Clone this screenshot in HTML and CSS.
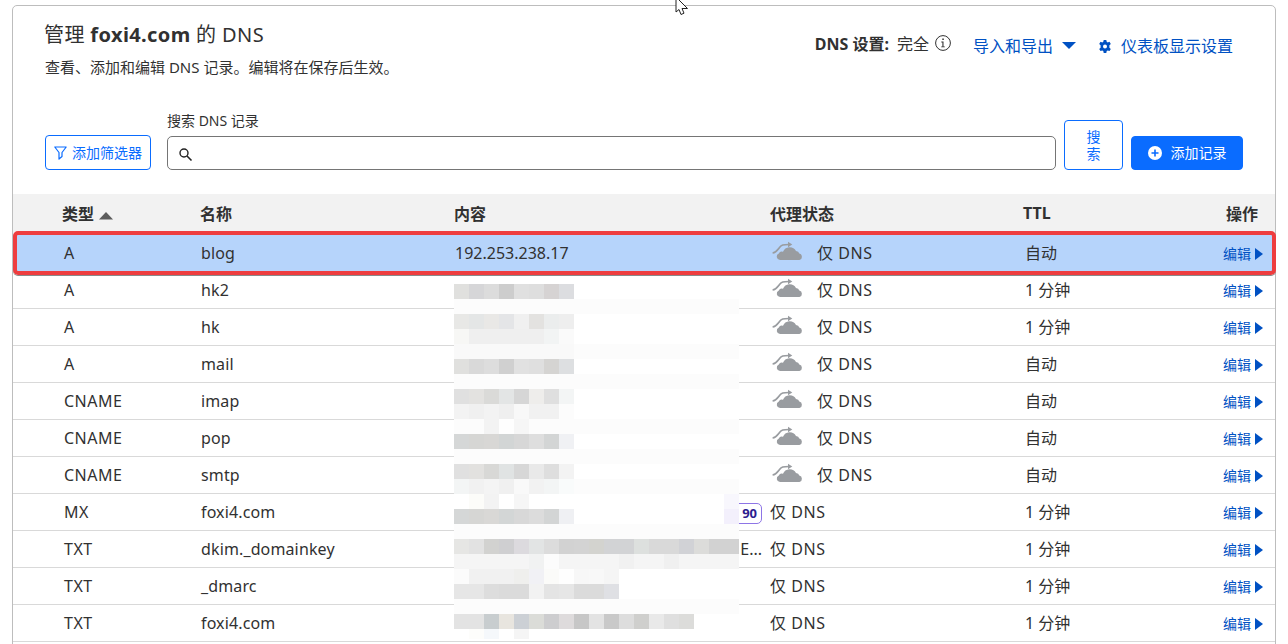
FILE: index.html
```html
<!DOCTYPE html>
<html lang="zh">
<head>
<meta charset="utf-8">
<title>DNS</title>
<link rel="stylesheet" href="styles.css">
</head>
<body>
<svg class="cursor" width="16" height="18" viewBox="0 0 16 18"><path d="M1 -3V12L4 9.500 6 14.500 9 13.200 7 8.500H12.500Z" fill="#fff" stroke="#222" stroke-width="1"/></svg>
<main class="card">
  <header class="head">
    <div class="top">
      <div class="intro">
        <h1 class="title">管理 <b>foxi4.com</b> 的 DNS</h1>
        <p class="sub">查看、添加和编辑 DNS 记录。编辑将在保存后生效。</p>
      </div>
      <div class="tools">
        <span class="setting"><b>DNS 设置:</b> 完全
          <svg class="info" width="16" height="16" viewBox="0 0 16 16"><circle cx="8" cy="8" r="7.400" fill="none" stroke="#313131"/><rect x="7.300" y="3.500" width="1.500" height="1.500" fill="#313131"/><path d="M6.300 6.600H8.500V11.500H9.800V12.300H6.200V11.500H7.400V7.400H6.300Z" fill="#313131"/></svg>
        </span>
        <a class="link export">导入和导出 <svg width="14" height="7" viewBox="0 0 14 7"><path d="M0 0H14L7 7Z" fill="#0051c3"/></svg></a>
        <a class="link dash"><svg width="12" height="13" viewBox="0 0 12 13"><path fill-rule="evenodd" d="M4.700 0H7.300L7.700 1.800 8.700 2.400 10.500 1.800 11.800 4 10.400 5.300V7.700L11.800 8.900 10.500 11.100 8.700 10.500 7.700 11.100 7.300 13H4.700L4.300 11.100 3.300 10.500 1.500 11.100 .2 8.900 1.600 7.700V5.300L.2 4 1.500 1.800 3.300 2.400 4.300 1.800ZM6 4.500A2 2 0 1 0 6 8.500 2 2 0 1 0 6 4.500Z" fill="#0051c3"/></svg> 仪表板显示设置</a>
      </div>
    </div>
    <div class="search-row">
      <button class="btn filter"><svg width="13" height="14" viewBox="0 0 13 14"><path d="M.8 1H12.200L8 6.500V10.500L5 13V6.500Z" fill="none" stroke="#0a6cff" stroke-width="1.200" stroke-linejoin="round"/></svg>添加筛选器</button>
      <label class="search">
        <span class="label">搜索 DNS 记录</span>
        <span class="input"><svg width="15" height="15" viewBox="0 0 15 15"><circle cx="6" cy="6" r="4" fill="none" stroke="#222" stroke-width="1.400"/><path d="M9 9L13.500 13.500" stroke="#222" stroke-width="1.600"/></svg></span>
      </label>
      <button class="btn go">搜索</button>
      <button class="btn add"><svg width="14" height="14" viewBox="0 0 14 14"><circle cx="7" cy="7" r="7" fill="#fff"/><path d="M7 3.500V10.500M3.500 7H10.500" stroke="#0a6cff" stroke-width="1.600"/></svg>添加记录</button>
    </div>
  </header>

  <section class="table">
    <div class="thead">
      <span>类型 <svg class="sort" width="14" height="8" viewBox="0 0 14 8"><path d="M7 0L14 7.500H0Z" fill="#5c5c5c"/></svg></span>
      <span>名称</span><span>内容</span><span>代理状态</span><span>TTL</span><span class="act">操作</span>
    </div>

    <div class="row selected"><span class="kind">A</span><span class="name">blog</span><span>192.253.238.17</span>
      <span class="status"><svg class="cloud" width="32" height="20"><use href="#cl"/></svg><span class="dns">仅 DNS</span></span><span>自动</span>
      <a class="edit">编辑<i class="arr"></i></a></div>
    <div class="row"><span class="kind">A</span><span class="name">hk2</span><span></span>
      <span class="status"><svg class="cloud" width="32" height="20"><use href="#cl"/></svg><span class="dns">仅 DNS</span></span><span>1 分钟</span>
      <a class="edit">编辑<i class="arr"></i></a></div>
    <div class="row"><span class="kind">A</span><span class="name">hk</span><span></span>
      <span class="status"><svg class="cloud" width="32" height="20"><use href="#cl"/></svg><span class="dns">仅 DNS</span></span><span>1 分钟</span>
      <a class="edit">编辑<i class="arr"></i></a></div>
    <div class="row"><span class="kind">A</span><span class="name">mail</span><span></span>
      <span class="status"><svg class="cloud" width="32" height="20"><use href="#cl"/></svg><span class="dns">仅 DNS</span></span><span>自动</span>
      <a class="edit">编辑<i class="arr"></i></a></div>
    <div class="row"><span class="kind">CNAME</span><span class="name">imap</span><span></span>
      <span class="status"><svg class="cloud" width="32" height="20"><use href="#cl"/></svg><span class="dns">仅 DNS</span></span><span>自动</span>
      <a class="edit">编辑<i class="arr"></i></a></div>
    <div class="row"><span class="kind">CNAME</span><span class="name">pop</span><span></span>
      <span class="status"><svg class="cloud" width="32" height="20"><use href="#cl"/></svg><span class="dns">仅 DNS</span></span><span>自动</span>
      <a class="edit">编辑<i class="arr"></i></a></div>
    <div class="row"><span class="kind">CNAME</span><span class="name">smtp</span><span></span>
      <span class="status"><svg class="cloud" width="32" height="20"><use href="#cl"/></svg><span class="dns">仅 DNS</span></span><span>自动</span>
      <a class="edit">编辑<i class="arr"></i></a></div>
    <div class="row"><span class="kind">MX</span><span class="name">foxi4.com</span><span class="tail"><em class="prio">90</em></span>
      <span class="dns">仅 DNS</span><span>1 分钟</span>
      <a class="edit">编辑<i class="arr"></i></a></div>
    <div class="row"><span class="kind">TXT</span><span class="name">dkim._domainkey</span><span class="tail">E...</span>
      <span class="dns">仅 DNS</span><span>1 分钟</span>
      <a class="edit">编辑<i class="arr"></i></a></div>
    <div class="row"><span class="kind">TXT</span><span class="name">_dmarc</span><span></span>
      <span class="dns">仅 DNS</span><span>1 分钟</span>
      <a class="edit">编辑<i class="arr"></i></a></div>
    <div class="row"><span class="kind">TXT</span><span class="name">foxi4.com</span><span></span>
      <span class="dns">仅 DNS</span><span>1 分钟</span>
      <a class="edit">编辑<i class="arr"></i></a></div>

    <svg class="mosaic" width="285" height="355" viewBox="0 0 285 355">
      <rect width="285" height="355" fill="#fff"/>
      <g>
        <rect x="0" y="0" width="15" fill="#e0e0de"/><rect x="15" y="0" width="15" fill="#d6d6d8"/><rect x="30" y="0" width="15" fill="#dcdcdc"/><rect x="45" y="0" width="15" fill="#cdcdcd"/><rect x="60" y="0" width="15" fill="#e0e0e0"/><rect x="75" y="0" width="15" fill="#dedede"/><rect x="90" y="0" width="15" fill="#d6d3d3"/><rect x="105" y="0" width="15" fill="#dcdde0"/>
        <rect x="0" y="15" width="285" fill="#fcfcfc"/>
        <rect x="0" y="30" width="15" fill="#e8e8e6"/><rect x="15" y="30" width="15" fill="#e4e6e6"/><rect x="30" y="30" width="15" fill="#e9e8e6"/><rect x="45" y="30" width="15" fill="#e4e5e7"/><rect x="60" y="30" width="15" fill="#f0f0f0"/><rect x="75" y="30" width="15" fill="#e3e2e0"/><rect x="90" y="30" width="15" fill="#ebeded"/><rect x="105" y="30" width="15" fill="#eeeeee"/>
        <rect x="0" y="45" width="15" fill="#f7f7f5"/><rect x="15" y="45" width="75" fill="#efefef"/><rect x="90" y="45" width="15" fill="#f2f4f4"/><rect x="105" y="45" width="15" fill="#fafafa"/>
        <rect x="0" y="60" width="285" fill="#fcfcfc"/><rect x="0" y="60" width="120" fill="#f9f9f9"/>
        <rect x="0" y="75" width="15" fill="#e0e0de"/><rect x="15" y="75" width="15" fill="#d9d9d9"/><rect x="30" y="75" width="15" fill="#dddddd"/><rect x="45" y="75" width="15" fill="#d0d0d0"/><rect x="60" y="75" width="15" fill="#e1e1e1"/><rect x="75" y="75" width="15" fill="#dfdfdf"/><rect x="90" y="75" width="15" fill="#d5d4d2"/><rect x="105" y="75" width="15" fill="#dddfe1"/>
        <rect x="0" y="90" width="285" fill="#fcfcfc"/>
        <rect x="0" y="105" width="15" fill="#e0e0e0"/><rect x="15" y="105" width="15" fill="#e3e2e0"/><rect x="30" y="105" width="15" fill="#dadad8"/><rect x="45" y="105" width="15" fill="#e3e5e5"/><rect x="60" y="105" width="15" fill="#d6d6d6"/><rect x="75" y="105" width="15" fill="#eeedeb"/><rect x="90" y="105" width="15" fill="#dfdfdf"/><rect x="105" y="105" width="15" fill="#f3f5f5"/>
        <rect x="0" y="120" width="15" fill="#f3f3f3"/><rect x="15" y="120" width="15" fill="#f0f0f0"/><rect x="30" y="120" width="15" fill="#f3f3f3"/><rect x="45" y="120" width="15" fill="#efefef"/><rect x="60" y="120" width="15" fill="#f8f8f8"/><rect x="75" y="120" width="30" fill="#f1f1f1"/><rect x="105" y="120" width="15" fill="#fcfcfc"/>
        <rect x="0" y="135" width="285" fill="#fcfcfc"/><rect x="30" y="135" width="15" fill="#f3f3f3"/><rect x="45" y="135" width="15" fill="#fefefe"/><rect x="60" y="135" width="15" fill="#f6f6f6"/>
        <rect x="0" y="150" width="15" fill="#d5d7d7"/><rect x="15" y="150" width="15" fill="#d6d6d4"/><rect x="30" y="150" width="15" fill="#d8d7d5"/><rect x="45" y="150" width="15" fill="#d2d5d5"/><rect x="60" y="150" width="15" fill="#d7d7d7"/><rect x="75" y="150" width="15" fill="#dedede"/><rect x="90" y="150" width="15" fill="#d3d5d5"/><rect x="105" y="150" width="15" fill="#f0f1f4"/>
        <rect x="0" y="165" width="285" fill="#fcfcfc"/>
        <rect x="0" y="180" width="15" fill="#e0e0e0"/><rect x="15" y="180" width="15" fill="#e2e1df"/><rect x="30" y="180" width="15" fill="#d8d8d6"/><rect x="45" y="180" width="15" fill="#e0e3e3"/><rect x="60" y="180" width="15" fill="#d7d7d7"/><rect x="75" y="180" width="15" fill="#e9e9e9"/><rect x="90" y="180" width="15" fill="#dedede"/><rect x="105" y="180" width="15" fill="#f3f3f3"/>
        <rect x="0" y="195" width="285" fill="#fcfcfc"/><rect x="0" y="195" width="15" fill="#f3f5f5"/><rect x="15" y="195" width="15" fill="#f1f1f1"/><rect x="30" y="195" width="15" fill="#f4f4f4"/><rect x="45" y="195" width="15" fill="#f0f0f0"/><rect x="60" y="195" width="15" fill="#f9f9f9"/><rect x="75" y="195" width="15" fill="#f2f2f2"/><rect x="90" y="195" width="15" fill="#f3f5f5"/><rect x="105" y="195" width="15" fill="#f9fbfb"/>
        <rect x="15" y="210" width="15" fill="#fcfcf9"/><rect x="30" y="210" width="15" fill="#f3f3f3"/><rect x="60" y="210" width="15" fill="#f6f6f6"/><rect x="270" y="210" width="15" fill="#f8f7fd"/>
        <rect x="0" y="225" width="15" fill="#d5d7d7"/><rect x="15" y="225" width="15" fill="#d6d6d4"/><rect x="30" y="225" width="15" fill="#d9d8d6"/><rect x="45" y="225" width="15" fill="#d3d6d6"/><rect x="60" y="225" width="15" fill="#d8d8d8"/><rect x="75" y="225" width="15" fill="#dcdcdc"/><rect x="90" y="225" width="15" fill="#d3d5d5"/><rect x="105" y="225" width="15" fill="#eff0f3"/><rect x="270" y="225" width="15" fill="#f3f0fc"/>
        <rect x="0" y="240" width="285" fill="#fcfcfc"/>
        <rect x="0" y="255" width="15" fill="#e6e6e4"/><rect x="15" y="255" width="15" fill="#e2e2e2"/><rect x="30" y="255" width="15" fill="#d2d2d0"/><rect x="45" y="255" width="15" fill="#cfcfd1"/><rect x="60" y="255" width="15" fill="#dcdade"/><rect x="75" y="255" width="15" fill="#e2e4e4"/><rect x="90" y="255" width="15" fill="#dcdcdc"/><rect x="105" y="255" width="15" fill="#d2d2d2"/><rect x="120" y="255" width="15" fill="#d3d3d3"/><rect x="135" y="255" width="15" fill="#d3d3cf"/><rect x="150" y="255" width="30" fill="#d2d3d5"/><rect x="180" y="255" width="15" fill="#dde0de"/><rect x="195" y="255" width="30" fill="#d9d9d9"/><rect x="225" y="255" width="15" fill="#d1d2d6"/><rect x="240" y="255" width="15" fill="#dcdcda"/><rect x="255" y="255" width="30" fill="#d2d2d2"/>
        <rect x="0" y="270" width="285" fill="#f5f5f5"/><rect x="75" y="270" width="15" fill="#f1f2f2"/><rect x="90" y="270" width="15" fill="#fcfcfc"/><rect x="165" y="270" width="15" fill="#f1f1f1"/><rect x="210" y="270" width="15" fill="#f0f0f0"/>
        <rect x="0" y="285" width="15" fill="#fbfbfb"/><rect x="15" y="285" width="45" fill="#f1f1f1"/><rect x="60" y="285" width="15" fill="#efefed"/><rect x="75" y="285" width="15" fill="#f1f1f5"/><rect x="90" y="285" width="15" fill="#fbfbf9"/><rect x="105" y="285" width="15" fill="#fefefe"/><rect x="120" y="285" width="15" fill="#f7f7f7"/><rect x="135" y="285" width="15" fill="#f8f8f8"/><rect x="150" y="285" width="15" fill="#f5f5f5"/>
        <rect x="0" y="300" width="30" fill="#e6e6e6"/><rect x="30" y="300" width="15" fill="#dddddd"/><rect x="45" y="300" width="30" fill="#dbdbdb"/><rect x="75" y="300" width="15" fill="#f2f2f2"/><rect x="90" y="300" width="15" fill="#e4e4e4"/><rect x="105" y="300" width="15" fill="#e6e6e6"/><rect x="120" y="300" width="30" fill="#dbdbdb"/><rect x="150" y="300" width="15" fill="#dfe0e4"/>
        <rect x="0" y="315" width="285" fill="#fcfcfc"/>
        <rect x="0" y="330" width="30" fill="#e3e3e3"/><rect x="30" y="330" width="15" fill="#c8cdcf"/><rect x="45" y="330" width="15" fill="#e8e5df"/><rect x="60" y="330" width="15" fill="#ccd0d5"/><rect x="75" y="330" width="15" fill="#dbdcd8"/><rect x="90" y="330" width="15" fill="#cdcdcf"/><rect x="105" y="330" width="15" fill="#dedbdc"/><rect x="120" y="330" width="15" fill="#c7c7c7"/><rect x="135" y="330" width="15" fill="#e3e3e3"/><rect x="150" y="330" width="15" fill="#c9c9c9"/><rect x="165" y="330" width="15" fill="#dddddd"/><rect x="180" y="330" width="15" fill="#cfcfcd"/><rect x="195" y="330" width="15" fill="#e9e9e9"/><rect x="210" y="330" width="15" fill="#dfdfdf"/><rect x="225" y="330" width="15" fill="#dcdcda"/>
        <rect class="last" x="15" y="345" width="15" fill="#fdfdfb"/><rect class="last" x="30" y="345" width="15" fill="#f5f8fb"/><rect class="last" x="60" y="345" width="15" fill="#f5f5f5"/>
      </g>
    </svg>
  </section>
</main>
<svg class="defs" width="0" height="0">
  <symbol id="cl" viewBox="0 0 32 20">
    <path d="M8 19A3.400 3.400 0 0 1 6.800 12.500 3 3 0 0 1 11 10.800 7.200 7.200 0 0 1 24 10 3.400 3.400 0 0 1 27.300 12.600 3.300 3.300 0 0 1 27.500 19Z" fill="#999ca0"/>
    <path d="M.6 12C4 11.500 5.500 9 7.500 6.500S11 3.500 17 3.500" fill="none" stroke="#999ca0" stroke-width="1.700"/>
    <path d="M16 .8L20.300 3.500 16 6.200Z" fill="#999ca0"/>
  </symbol>
</svg>
</body>
</html>
```
FILE: styles.css
```css
* { box-sizing: border-box; }
html, body { margin: 0; padding: 0; height: 644px; overflow: hidden; background: #fff; }
body {
  font-family: "Noto Sans", "Noto Sans CJK SC", sans-serif;
  color: #313131;
  font-size: 16px;
  padding: 5px 12px 0;
  position: relative;
}
.cursor { position: absolute; left: 675px; top: 0; z-index: 5; }
.defs { position: absolute; }
.card {
  width: 1264px;
  height: 660px;
  border: 1px solid #bdbdbd;
  border-radius: 5px;
}
.head { height: 188px; padding: 15px 32px 0; display: flex; flex-direction: column; }
.top { display: flex; justify-content: space-between; height: 85px; padding-right: 10px; }
.title { margin: 0 0 0 -1px; font-size: 20px; font-weight: 400; line-height: 28px; letter-spacing: .38px; }
.sub { margin: 7px 0 0; font-size: 15px; line-height: 22px; }
.tools { display: flex; align-items: center; height: 20px; margin-top: 15px; font-size: 16px; line-height: 20px; }
.setting { display: flex; align-items: center; gap: 8px; margin-top: -4px; }
.setting b { font-size: 16px; }
.info { margin-left: -2px; margin-top: -3px; }
.link { color: #0051c3; display: flex; align-items: center; }
.export { margin-left: 22px; gap: 9px; }
.export svg { margin-top: -2px; }
.dash { margin-left: 23px; gap: 10px; }
.search-row { display: flex; align-items: flex-end; margin-top: 8px; height: 56px; }
.btn {
  font: inherit;
  font-size: 14px;
  line-height: 20px;
  border-radius: 4px;
  border: 1px solid #0a6cff;
  background: #fff;
  color: #0a6cff;
  padding: 0;
  display: flex;
  align-items: center;
  justify-content: center;
}
.filter { width: 106px; height: 35px; gap: 5px; margin-right: 16px; }
.search { flex: 1; display: flex; flex-direction: column; }
.label { font-size: 14px; line-height: 20px; margin-bottom: 5px; }
.input {
  height: 34px;
  border: 1px solid #757575;
  border-radius: 5px;
  display: flex;
  align-items: center;
  padding: 2px 0 0 10px;
}
.go { width: 59px; height: 50px; margin-left: 8px; padding: 0 20px; line-height: 17px; }
.add { width: 112px; height: 34px; margin-left: 8px; background: #0a6cff; color: #fff; gap: 9px; }

.table { position: relative; }
.thead, .row { display: grid; }
.thead {
  grid-template-columns: 138px 254px 316px 253px 1fr 60px;
  background: #f2f2f2;
  height: 41px;
  padding: 0 17px 4px 49px;
  align-items: center;
  font-weight: 700;
  font-size: 16px;
}
.thead span { white-space: nowrap; }
.sort { margin-left: 1px; }
.act { text-align: right; }
.row {
  grid-template-columns: 137px 254px 315px 255px 1fr auto;
  height: 37px;
  padding: 0 12px 0 51px;
  align-items: center;
  border-bottom: 1px solid #d9d9d9;
  position: relative;
  font-size: 16px;
  line-height: 22px;
}
.kind { letter-spacing: .5px; }
.name { letter-spacing: .13px; }
.dns { letter-spacing: .55px; white-space: nowrap; }
.selected { background: #b6d4fb; }
.selected::after {
  content: "";
  position: absolute;
  left: 0;
  right: -1px;
  top: -4px;
  bottom: -4px;
  border: 4px solid #ee3d3f;
  border-radius: 5px;
  box-shadow: 0 1px 0 #8a8a8a;
}
.status { display: flex; align-items: center; gap: 13px; margin-left: 2px; }
.cloud { margin-top: -4px; }
.tail { text-align: right; padding-right: 8px; font-size: 16px; }
.prio {
  font-style: normal;
  font-weight: 700;
  font-size: 13px;
  color: #2c1d8f;
  display: inline-block;
  width: 40px;
  height: 21px;
  line-height: 19px;
  text-align: right;
  padding-right: 4px;
  border: 1px solid #8e75e6;
  border-radius: 5px;
}
.edit { color: #0051c3; font-size: 14px; display: flex; align-items: center; gap: 4px; justify-self: end; padding-top: 2px; }
.arr { display: block; width: 0; height: 0; border-left: 8px solid #0051c3; border-top: 6.500px solid transparent; border-bottom: 6.500px solid transparent; }
.mosaic { position: absolute; left: 441px; top: 90px; }
.mosaic g rect { height: 15px; }
.mosaic g rect.last { height: 10px; }
```
